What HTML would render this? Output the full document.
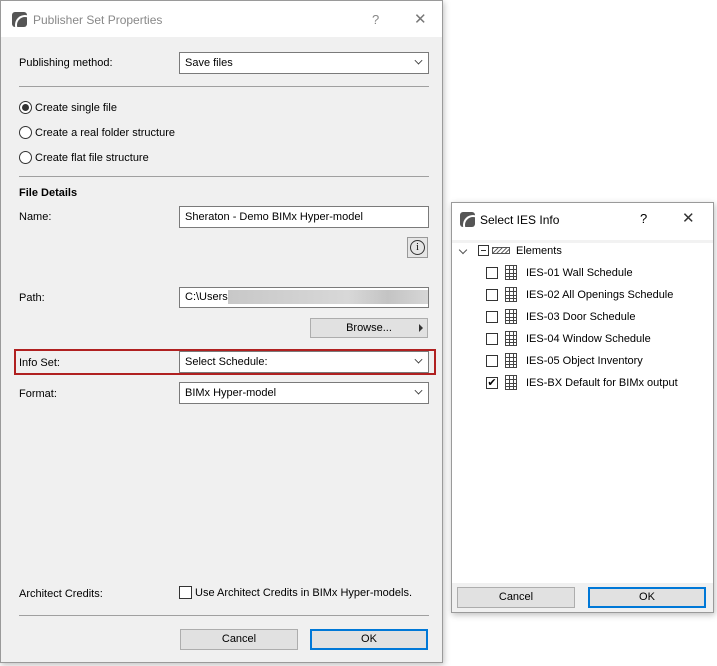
<!DOCTYPE html>
<html><head><style>
*{box-sizing:border-box;margin:0;padding:0}
body{width:717px;height:666px;background:#fff;font-family:"Liberation Sans",sans-serif;font-size:11px;color:#000;position:relative;overflow:hidden}
.a{position:absolute}
.dlg{border:1px solid #9a9a9a;background:#f0f0f0;box-shadow:1px 2px 6px rgba(0,0,0,.25)}
.tb{background:#fff;left:0;right:0;top:0}
.field{background:#fff;border:1px solid #7a7a7a;padding:0 5px;line-height:20px;white-space:nowrap;overflow:hidden}
.chev{position:absolute;right:6px;top:4px;width:7px;height:7px;border-right:1px solid #333;border-bottom:1px solid #333;transform:rotate(45deg) scale(.8)}
.btn{background:#e1e1e1;border:1px solid #adadad;text-align:center;line-height:19px}
.ok{background:#e1e1e1;border:2px solid #0078d7;text-align:center;line-height:17px}
.sep{height:1px;background:#a0a0a0}
.radio{width:13px;height:13px;border:1px solid #333;border-radius:50%;background:#fff}
.cb{width:12px;height:12px;border:1px solid #333;background:#fff}
.grid{width:12px;height:15px;border:1px solid #444;background:
linear-gradient(#444,#444) 3px 0/1px 100% no-repeat,linear-gradient(#444,#444) 7px 0/1px 100% no-repeat,
linear-gradient(#444,#444) 0 3px/100% 1px no-repeat,linear-gradient(#444,#444) 0 7px/100% 1px no-repeat,linear-gradient(#444,#444) 0 10px/100% 1px no-repeat}
.logo{width:15px;height:15px;background:#555;border-radius:3px;overflow:hidden}
.logo:after{content:"";position:absolute;left:3px;top:3px;width:16px;height:16px;border:2px solid #fff;border-radius:50%;border-right-color:transparent;border-bottom-color:transparent}
</style></head><body>

<div class="a dlg" style="left:0;top:0;width:443px;height:663px">
 <div class="a tb" style="height:36px"></div>
 <div class="a logo" style="left:11px;top:11px"></div>
 <div class="a" style="left:32px;top:12px;font-size:12px;color:#888">Publisher Set Properties</div>
 <div class="a" style="left:371px;top:11px;color:#888;font-size:13px">?</div>
 <div class="a" style="left:413px;top:9px;color:#777;font-size:15px">✕</div>

 <div class="a" style="left:18px;top:56px">Publishing method:</div>
 <div class="a field" style="left:178px;top:51px;width:250px;height:22px">Save files<div class="chev"></div></div>
 <div class="a sep" style="left:18px;top:85px;width:410px"></div>

 <div class="a radio" style="left:18px;top:100px"><div class="a" style="left:2px;top:2px;width:7px;height:7px;border-radius:50%;background:#333"></div></div>
 <div class="a" style="left:34px;top:101px">Create single file</div>
 <div class="a radio" style="left:18px;top:125px"></div>
 <div class="a" style="left:34px;top:126px">Create a real folder structure</div>
 <div class="a radio" style="left:18px;top:150px"></div>
 <div class="a" style="left:34px;top:151px">Create flat file structure</div>
 <div class="a sep" style="left:18px;top:175px;width:410px"></div>
 <div class="a" style="left:18px;top:186px;font-weight:bold">File Details</div>

 <div class="a" style="left:18px;top:210px">Name:</div>
 <div class="a field" style="left:178px;top:205px;width:250px;height:22px">Sheraton - Demo BIMx Hyper-model</div>
 <div class="a" style="left:406px;top:236px;width:21px;height:21px;border:1px solid #999;background:#e6e6e6"><div class="a" style="left:2px;top:2px;width:15px;height:15px;border:1px solid #333;border-radius:50%;text-align:center;font-size:10px;line-height:13px;font-family:'Liberation Serif',serif">i</div></div>

 <div class="a" style="left:18px;top:291px">Path:</div>
 <div class="a field" style="left:178px;top:286px;width:250px;height:21px;line-height:19px">C:\Users<span style="display:inline-block;width:200px;height:14px;vertical-align:middle;background:linear-gradient(90deg,#c8c8c8,#d8d8d8 60%,#c4c4c4 80%,#d6d6d6)"></span></div>
 <div class="a btn" style="left:309px;top:317px;width:118px;height:20px">Browse...<span class="a" style="right:4px;top:5px;border-left:4px solid #333;border-top:4px solid transparent;border-bottom:4px solid transparent"></span></div>

 <div class="a" style="left:13px;top:348px;width:422px;height:26px;border:2px solid #b02020"></div>
 <div class="a" style="left:18px;top:356px">Info Set:</div>
 <div class="a field" style="left:178px;top:350px;width:250px;height:22px">Select Schedule:<div class="chev"></div></div>
 <div class="a" style="left:18px;top:387px">Format:</div>
 <div class="a field" style="left:178px;top:381px;width:250px;height:22px">BIMx Hyper-model<div class="chev"></div></div>

 <div class="a" style="left:18px;top:587px">Architect Credits:</div>
 <div class="a cb" style="left:178px;top:585px;width:13px;height:13px"></div>
 <div class="a" style="left:194px;top:586px">Use Architect Credits in BIMx Hyper-models.</div>
 <div class="a sep" style="left:18px;top:614px;width:410px"></div>
 <div class="a btn" style="left:179px;top:628px;width:118px;height:21px">Cancel</div>
 <div class="a ok" style="left:309px;top:628px;width:118px;height:21px">OK</div>
</div>

<div class="a dlg" style="left:451px;top:202px;width:263px;height:411px">
 <div class="a" style="left:0;right:0;top:0;height:380px;background:#fff"></div>
 <div class="a logo" style="left:8px;top:9px"></div>
 <div class="a" style="left:28px;top:10px;font-size:12px">Select IES Info</div>
 <div class="a" style="left:188px;top:8px;font-size:13px">?</div>
 <div class="a" style="left:230px;top:6px;color:#333;font-size:15px">✕</div>
 <div class="a" style="left:0;right:0;top:37px;height:3px;background:#f2f2f2"></div>
 <div class="a" style="left:8px;top:44px;width:6px;height:6px;border-right:1px solid #555;border-bottom:1px solid #555;transform:rotate(45deg)"></div>
 <div class="a" style="left:26px;top:42px;width:11px;height:11px;border:1px solid #333;"><div class="a" style="left:2px;top:4px;width:5px;height:1px;background:#333"></div></div>
 <div class="a" style="left:40px;top:44px;width:18px;height:7px;border:1px solid #555;background:repeating-linear-gradient(135deg,#666 0 1px,#fff 1px 3px)"></div>
 <div class="a" style="left:64px;top:42px">Elements</div>

 <div class="a cb" style="left:34px;top:64px"></div><div class="a grid" style="left:53px;top:62px"></div><div class="a" style="left:74px;top:64px">IES-01 Wall Schedule</div>
 <div class="a cb" style="left:34px;top:86px"></div><div class="a grid" style="left:53px;top:84px"></div><div class="a" style="left:74px;top:86px">IES-02 All Openings Schedule</div>
 <div class="a cb" style="left:34px;top:108px"></div><div class="a grid" style="left:53px;top:106px"></div><div class="a" style="left:74px;top:108px">IES-03 Door Schedule</div>
 <div class="a cb" style="left:34px;top:130px"></div><div class="a grid" style="left:53px;top:128px"></div><div class="a" style="left:74px;top:130px">IES-04 Window Schedule</div>
 <div class="a cb" style="left:34px;top:152px"></div><div class="a grid" style="left:53px;top:150px"></div><div class="a" style="left:74px;top:152px">IES-05 Object Inventory</div>
 <div class="a cb" style="left:34px;top:174px;font-size:11px;line-height:10px;text-align:center">✔</div><div class="a grid" style="left:53px;top:172px"></div><div class="a" style="left:74px;top:174px">IES-BX Default for BIMx output</div>

 <div class="a btn" style="left:5px;top:384px;width:118px;height:21px">Cancel</div>
 <div class="a ok" style="left:136px;top:384px;width:118px;height:21px">OK</div>
</div>
</body></html>
